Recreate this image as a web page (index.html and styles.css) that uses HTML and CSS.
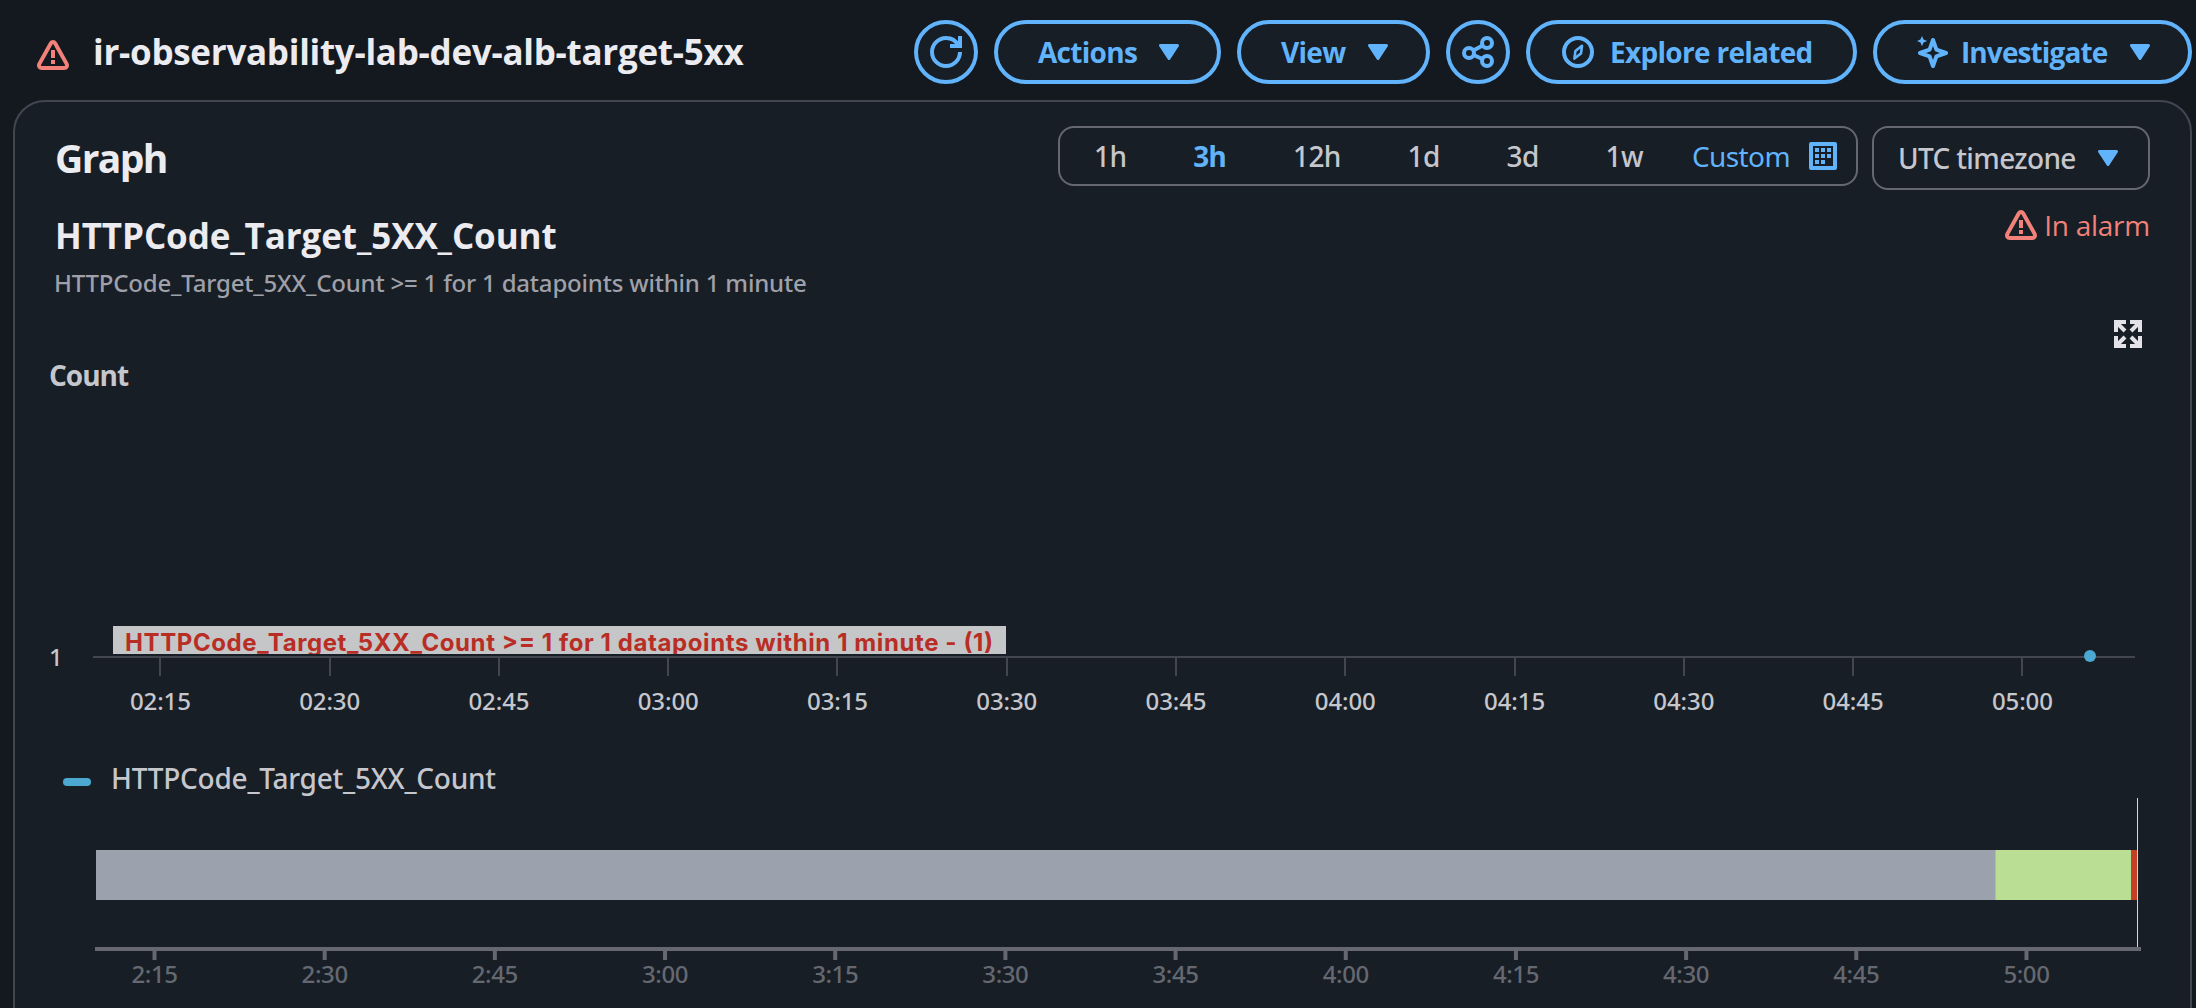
FILE: index.html
```
<!DOCTYPE html>
<html lang="en">
<head>
    <meta charset="UTF-8">
    <meta name="viewport" content="width=device-width, initial-scale=1.0">
    <title>ir-observability-lab-dev-alb-target-5xx</title>
    <link rel="stylesheet" href="styles.css">
</head>
<body>

    <!-- Shared icons -->
    <svg class="sprite" width="0" height="0">
        <symbol id="icon-alert" viewBox="0 0 32 30">
            <path d="M13.9 3.3 2.5 23.6C1.3 25.9 2.5 28 4.9 28h22.2c2.4 0 3.6-2.1 2.4-4.4L18.1 3.3c-1-1.7-3.2-1.7-4.2 0z" fill="none" stroke="currentColor" stroke-width="4"/>
            <path d="M14 10h4v8h-4zM14 20h4v4h-4z" fill="currentColor"/>
        </symbol>
        <symbol id="icon-caret" viewBox="0 0 20 16">
            <path d="M1.5 1.5h17L10 14.5z" fill="currentColor" stroke="currentColor" stroke-width="3" stroke-linejoin="round"/>
        </symbol>
    </svg>

    <!-- Page header -->
    <header class="page-header">
        <div class="page-title">
            <svg class="icon-alert"><use href="#icon-alert"/></svg>
            <h1>ir-observability-lab-dev-alb-target-5xx</h1>
        </div>
        <div class="actions">
            <button class="btn btn-round" aria-label="Refresh">
                <svg class="icon" viewBox="0 0 16 16">
                    <path d="M15 8c0 3.87-3.13 7-7 7s-7-3.13-7-7 3.13-7 7-7c2.8 0 5.2 1.6 6.3 4M10 5h5V0"/>
                </svg>
            </button>
            <button class="btn btn-actions">
                <span>Actions</span>
                <svg class="caret"><use href="#icon-caret"/></svg>
            </button>
            <button class="btn btn-view">
                <span>View</span>
                <svg class="caret"><use href="#icon-caret"/></svg>
            </button>
            <button class="btn btn-round" aria-label="Share">
                <svg class="icon" viewBox="0 0 16 16">
                    <circle cx="3.5" cy="8.5" r="2.5"/>
                    <circle cx="12.5" cy="3.5" r="2.5"/>
                    <circle cx="12.5" cy="12.5" r="2.5"/>
                    <path d="M5.7 7.3l4.6-2.5M5.8 9.5l4.4 2"/>
                </svg>
            </button>
            <button class="btn btn-explore">
                <svg class="icon" viewBox="0 0 16 16">
                    <circle cx="8" cy="8" r="7"/>
                    <path class="needle" d="M10 4.9 6.7 7.5 6.2 11.3 9.5 8.7z"/>
                </svg>
                <span>Explore related</span>
            </button>
            <button class="btn btn-investigate">
                <svg class="icon" viewBox="0 0 16 16">
                    <path class="star" d="M8.5 2l1.7 4.8L15 8.5l-4.8 1.7L8.5 15l-1.7-4.8L2 8.5l4.8-1.7z"/>
                    <path class="solid" d="M3 0l.8 1.8 1.8.7-1.8.8L3 5.1l-.8-1.8L.5 2.5l1.7-.7z"/>
                </svg>
                <span>Investigate</span>
                <svg class="caret"><use href="#icon-caret"/></svg>
            </button>
        </div>
    </header>

    <!-- Graph panel -->
    <main class="panel">
        <div class="panel-header">
            <h2>Graph</h2>
            <div class="filters">
                <div class="ranges">
                    <span class="range">1h</span>
                    <span class="range active">3h</span>
                    <span class="range">12h</span>
                    <span class="range">1d</span>
                    <span class="range">3d</span>
                    <span class="range">1w</span>
                    <span class="custom">Custom</span>
                    <svg class="calendar" viewBox="0 0 28 28">
                        <rect x="2" y="2" width="24" height="24" fill="none" stroke="currentColor" stroke-width="4" stroke-linejoin="round"/>
                        <path d="M6 6h4v4H6zM12 6h4v4h-4zM18 6h4v4h-4zM6 12h4v4H6zM12 12h4v4h-4zM18 12h4v4h-4zM6 18h4v4H6zM12 18h4v4h-4z" fill="currentColor"/>
                    </svg>
                </div>
                <div class="timezone">
                    <span>UTC timezone</span>
                    <svg class="caret"><use href="#icon-caret"/></svg>
                </div>
            </div>
        </div>

        <div class="metric">
            <div>
                <h3>HTTPCode_Target_5XX_Count</h3>
                <p>HTTPCode_Target_5XX_Count &gt;= 1 for 1 datapoints within 1 minute</p>
            </div>
            <div class="state">
                <svg class="icon-alert"><use href="#icon-alert"/></svg>
                <span>In alarm</span>
            </div>
        </div>

        <div class="toolbar">
            <svg class="expand" viewBox="0 0 28 28">
                <path d="M12 2H2v10M2 2l9 9M16 2h10v10M26 2l-9 9M12 26H2V16M2 26l9-9M16 26h10V16M26 26l-9-9"/>
            </svg>
        </div>

        <svg class="chart" width="2175" height="370">
            <text class="unit" x="34" y="38">Count</text>
            <text class="tick-label" x="34" y="318">1</text>
            <rect class="axis" x="78" y="308" width="2042" height="2"/>
            <g id="chart-ticks"></g>
            <svg x="98" y="278" width="893" height="28">
                <rect class="note-bg" width="893" height="28"/>
                <text class="note" x="12" y="25.3" textLength="868">HTTPCode_Target_5XX_Count &gt;= 1 for 1 datapoints within 1 minute - (1)</text>
            </svg>
            <circle class="point" cx="2075" cy="308" r="6"/>
        </svg>

        <div class="legend">
            <span class="legend-mark"></span>
            <span>HTTPCode_Target_5XX_Count</span>
        </div>

        <svg class="timeline" width="2175" height="210">
            <rect class="no-data" x="81" y="52" width="1900" height="50"/>
            <rect class="ok" x="1980.5" y="52" width="135.5" height="50"/>
            <rect class="alarm" x="2116" y="52" width="6" height="50"/>
            <rect class="now" x="2122" y="0" width="1" height="150"/>
            <rect class="bar-axis" x="80" y="149" width="2046" height="4"/>
            <g id="timeline-ticks"></g>
        </svg>
    </main>

    <script>
        const times = ['2:15', '2:30', '2:45', '3:00', '3:15', '3:30', '3:45', '4:00', '4:15', '4:30', '4:45', '5:00'];

        function drawTicks(id, start, step, tick, labelY, prefix) {
            let html = '';
            times.forEach((time, i) => {
                const x = start + step * i;
                const left = tick.round ? Math.round(x - tick.width / 2) : x - tick.width / 2;
                html += `<rect class="${tick.name}" x="${left}" y="${tick.y}" width="${tick.width}" height="${tick.height}"/>`;
                html += `<text class="${tick.name}-label" x="${x}" y="${labelY}" text-anchor="middle">${prefix}${time}</text>`;
            });
            document.getElementById(id).innerHTML = html;
        }

        drawTicks('chart-ticks', 145.4, 169.27, { name: 'tick', y: 310, width: 2, height: 18, round: true }, 362, '0');
        drawTicks('timeline-ticks', 139.5, 170.18, { name: 'bar-tick', y: 153, width: 4, height: 9 }, 185, '');
    </script>
</body>
</html>
```
FILE: styles.css
```
* {
    box-sizing: border-box;
}
body {
    margin: 0;
    height: 1008px;
    overflow: hidden;
    display: flex;
    flex-direction: column;
    background: #141920;
    color: #ebebf0;
    font-family: "Open Sans", "Noto Sans", sans-serif;
    font-size: 28px;
}
h1, h2, h3, p {
    margin: 0;
}
.sprite {
    position: absolute;
}
.page-header {
    display: flex;
    justify-content: space-between;
    align-items: flex-start;
    height: 100px;
    padding: 20px 4px 0 37px;
    flex-shrink: 0;
}
.page-title {
    display: flex;
    align-items: center;
    height: 64px;
    gap: 24px;
}
.page-title .icon-alert {
    margin-top: 6px;
}
h1 {
    font-size: 35px;
    font-weight: 700;
    letter-spacing: -0.28px;
    line-height: 62px;
}
.icon-alert {
    width: 32px;
    height: 30px;
    color: #f28179;
}
.actions {
    display: flex;
    gap: 16px;
}
.btn {
    display: flex;
    align-items: center;
    height: 64px;
    padding: 0 38px 0 40px;
    border: 4px solid #61b3fc;
    border-radius: 32px;
    background: #171e25;
    color: #61b3fc;
    font-family: inherit;
    font-size: 28px;
    font-weight: 700;
    letter-spacing: -0.7px;
}
.btn-round {
    width: 64px;
    padding: 0;
    justify-content: center;
}
.btn-actions, .btn-view {
    justify-content: space-between;
}
.btn-actions {
    width: 227px;
}
.btn-view {
    width: 193px;
}
.btn-explore {
    width: 331px;
    padding-left: 32px;
    gap: 16px;
}
.btn-investigate {
    width: 319px;
    padding: 0 38px 0 39px;
    letter-spacing: -0.9px;
}
.btn-investigate span {
    margin: 0 auto 0 13px;
}
.icon {
    width: 32px;
    height: 32px;
    fill: none;
    stroke: currentColor;
    stroke-width: 2;
    flex-shrink: 0;
}
.icon .needle {
    stroke-width: 1.3;
    stroke-linejoin: round;
}
.icon .star {
    stroke-linejoin: round;
}
.icon .solid {
    fill: currentColor;
    stroke: none;
}
.caret {
    width: 20px;
    height: 16px;
    color: #61b3fc;
    flex-shrink: 0;
}
.panel {
    flex: 1 0 auto;
    width: 2179px;
    height: 940px;
    margin-left: 13px;
    border: 2px solid #424650;
    border-radius: 32px;
    background: #171e25;
}
.panel-header {
    display: flex;
    justify-content: space-between;
    padding: 24px 40px 0 40px;
}
h2 {
    font-size: 39px;
    letter-spacing: -1.6px;
    line-height: 64px;
}
.filters {
    display: flex;
    align-items: flex-start;
    gap: 14px;
    color: #c6c6cd;
}
.ranges {
    display: flex;
    align-items: center;
    width: 800px;
    height: 60px;
    padding: 0 19px 1px 34px;
    border: 2px solid #656871;
    border-radius: 16px;
    font-family: "Noto Sans", sans-serif;
    font-weight: 500;
    letter-spacing: -0.6px;
}
.range {
    margin-right: 66.8px;
}
.range:nth-child(6) {
    margin-right: 0;
}
.range.active {
    color: #61b3fc;
    font-weight: 700;
}
.custom {
    margin-left: auto;
    margin-right: 19px;
    color: #61b3fc;
    font-weight: 400;
}
.calendar {
    width: 28px;
    height: 28px;
    color: #61b3fc;
    flex-shrink: 0;
}
.timezone {
    display: flex;
    align-items: center;
    justify-content: space-between;
    width: 278px;
    height: 64px;
    padding: 0 30px 0 24px;
    border: 2px solid #656871;
    border-radius: 16px;
    font-family: "Noto Sans", sans-serif;
    font-weight: 500;
    letter-spacing: -0.65px;
}
.metric {
    display: flex;
    justify-content: space-between;
    height: 130px;
    padding: 22px 40px 0 40px;
}
h3 {
    margin-top: 1px;
    font-size: 35px;
    letter-spacing: -0.1px;
    line-height: 46px;
}
.metric p {
    margin-top: 7px;
    margin-left: -1px;
    font-family: "Noto Sans", sans-serif;
    font-size: 24px;
    font-weight: 500;
    line-height: 34px;
    letter-spacing: -0.19px;
    color: #9fa0a9;
}
.state {
    display: flex;
    align-items: center;
    gap: 7px;
    height: 38px;
    margin-top: -6px;
    color: #f28179;
    letter-spacing: -0.25px;
}
.toolbar {
    display: flex;
    justify-content: flex-end;
    height: 28px;
    padding-right: 48px;
}
.expand {
    width: 28px;
    height: 28px;
    fill: none;
    stroke: #e3e2e8;
    stroke-width: 4;
}
.chart, .timeline {
    display: block;
}
.unit {
    fill: #c6c6cd;
    font-weight: 700;
    letter-spacing: -1px;
}
.axis, .tick {
    fill: #424650;
}
.tick-label {
    fill: #c6c6cd;
    font-family: "Noto Sans", sans-serif;
    font-size: 24px;
    font-weight: 500;
    letter-spacing: -0.1px;
}
.note-bg {
    fill: #c5c6c8;
}
.note {
    fill: #b82e25;
    font-family: Inter, sans-serif;
    font-size: 24px;
    font-weight: 700;
}
.point {
    fill: #4aa8d1;
}
.legend {
    display: flex;
    align-items: center;
    gap: 20px;
    height: 80px;
    padding: 40px 0 0 48px;
    color: #c6c6cd;
    font-family: "Noto Sans", sans-serif;
    font-weight: 500;
    letter-spacing: -0.25px;
}
.legend-mark {
    width: 28px;
    height: 8px;
    margin-top: 8px;
    border-radius: 4px;
    background: #4aa8d1;
}
.no-data {
    fill: #9ba2ae;
}
.ok {
    fill: #bbde95;
}
.alarm {
    fill: #c43f23;
}
.now {
    fill: #d5d7db;
}
.bar-axis, .bar-tick {
    fill: #656871;
}
.bar-tick-label {
    fill: #656871;
    font-family: "Noto Sans", sans-serif;
    font-size: 24px;
    font-weight: 500;
    letter-spacing: -0.4px;
}
```
